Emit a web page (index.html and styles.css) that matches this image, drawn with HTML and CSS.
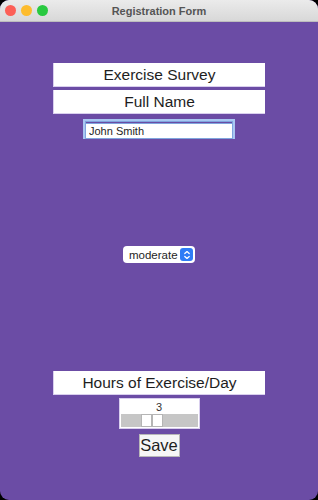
FILE: index.html
```html
<!DOCTYPE html>
<html>
<head>
<meta charset="utf-8">
<title>Registration Form</title>
<link rel="stylesheet" href="styles.css">
</head>
<body>
 <div class="window">
  <div class="titlebar">
   <div class="lights">
    <span class="light red"></span>
    <span class="light yellow"></span>
    <span class="light green"></span>
   </div>
   <div class="title">Registration Form</div>
  </div>
  <div class="content">
   <div class="label first">Exercise Survey</div>
   <div class="label">Full Name</div>
   <div class="field"><input type="text" value="John Smith"></div>
   <div class="select">
    <span>moderate</span>
    <span class="stepper">
     <svg width="12" height="12" viewBox="0 0 12 12">
      <path d="M3.8 4.6 L6 2.6 L8.2 4.6" fill="none" stroke="#fff" stroke-width="1.3" stroke-linecap="round" stroke-linejoin="round"/>
      <path d="M3.8 7.4 L6 9.4 L8.2 7.4" fill="none" stroke="#fff" stroke-width="1.3" stroke-linecap="round" stroke-linejoin="round"/>
     </svg>
    </span>
   </div>
   <div class="label hours">Hours of Exercise/Day</div>
   <div class="scale">
    <div class="scale-value">3</div>
    <div class="scale-track">
     <span class="thumb"></span><span class="thumb"></span>
    </div>
   </div>
   <div class="save">Save</div>
  </div>
 </div>
</body>
</html>
```

FILE: styles.css
```css
*{
 margin:0;
 padding:0;
 box-sizing:border-box;
}
html,body{
 width:318px;
 height:500px;
 background:#000;
 overflow:hidden;
}
body{
 font-family:"Liberation Sans",Arial,sans-serif;
}
.window{
 width:318px;
 height:500px;
 background:#6b4ca5;
 border-radius:9px;
 overflow:hidden;
 display:flex;
 flex-direction:column;
}
.titlebar{
 height:22px;
 background:linear-gradient(#ebebeb,#d8d8d8);
 border-bottom:1px solid #bdbdbd;
 display:flex;
 align-items:center;
 justify-content:center;
 position:relative;
}
.lights{
 position:absolute;
 left:5px;
 top:5px;
 display:flex;
 gap:5px;
}
.light{
 width:11px;
 height:11px;
 border-radius:50%;
}
.red{background:#fc5f57;}
.yellow{background:#fdbc2e;}
.green{background:#29c940;}
.title{
 font-size:11px;
 font-weight:bold;
 color:#555;
}
.content{
 display:flex;
 flex-direction:column;
 align-items:center;
}
.label{
 width:212px;
 height:24px;
 margin-top:3px;
 background:#fff;
 border-bottom:1px solid #d9cfee;
 border-left:1px solid #d9cfee;
 text-align:center;
 font-size:15.5px;
 line-height:24px;
 color:#1e1e1e;
}
.label.first{
 margin-top:41px;
}
.field{
 margin-top:5px;
 width:152px;
 height:20px;
 border:2px solid #a9c7f2;
 box-shadow:inset 0 0 0 1px #7fa5dd;
}
.field input{
 width:100%;
 height:100%;
 border:1px solid #7fa5dd;
 outline:none;
 padding-left:3px;
 font-family:"Liberation Sans",Arial,sans-serif;
 font-size:11px;
 color:#1e1e1e;
 background:#fff;
}
.select{
 margin-top:107px;
 width:72px;
 height:17px;
 background:#fff;
 border-radius:4px;
 display:flex;
 align-items:center;
 justify-content:space-between;
 padding:0 2px 0 6px;
 font-size:11.5px;
 color:#1e1e1e;
}
.stepper{
 width:13px;
 height:13px;
 border-radius:3px;
 background:#2e7cf6;
 display:flex;
 align-items:center;
 justify-content:center;
}
.label.hours{
 margin-top:108px;
}
.scale{
 margin-top:3px;
 width:81px;
 height:31px;
 background:#fff;
 border:1px solid #d9cfee;
}
.scale-value{
 height:15px;
 text-align:center;
 font-size:11px;
 line-height:16px;
 color:#333;
}
.scale-track{
 margin:0 1px;
 height:13px;
 background:#c6c6c6;
 display:flex;
 padding-left:20px;
}
.thumb{
 width:11px;
 height:13px;
 background:#fff;
 border:1px solid #b5b5b5;
}
.save{
 margin-top:5px;
 width:41px;
 height:23px;
 background:#f6f6f6;
 border:1px solid #b8b8b8;
 text-align:center;
 font-size:16.5px;
 line-height:21px;
 color:#1e1e1e;
}
```
